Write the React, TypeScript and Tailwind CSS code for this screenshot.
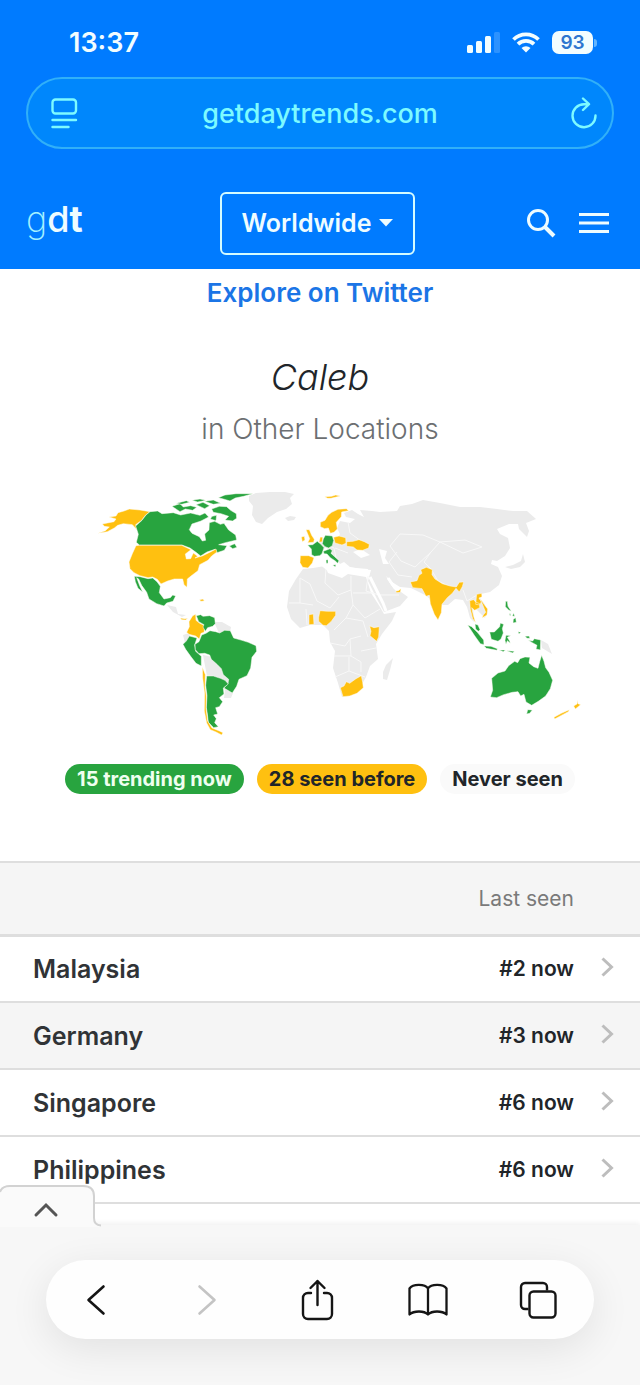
import React from "react";

type Tone = "now" | "before" | "never";
type Shape = { tone: Tone; d: string };
type Region = { transform: string; shapes: Shape[] };

const fills: Record<Tone, string> = {
  now: "#28a43f",
  before: "#ffc010",
  never: "#ebebeb",
};

const regions: Region[] = [
  {
    transform: "translate(0 0)",
    shapes: [
      // Greenland, Iceland, Svalbard
      { tone: "never", d: "M249 495 256 492 270 491 285 491 294 493 290 497 292 503 286 508 277 511 268 517 262 523 256 521 252 514 253 505 249 500Z" },
      { tone: "never", d: "M285 517 290 515 296 516 294 519 288 520Z" },
      // Europe and Asia
      { tone: "never", d: "M344 512 352 509 358 513 364 516 360 509 372 510 380 511 397 510 400 505 412 503 423 499 440 502 460 506 480 506 497 508 513 510 527 510 536 518 526 522 529 530 527 536 519 528 518 523 509 523 497 528 500 533 508 537 510 547 505 555 497 560 492 559 491 563 498 566 502 575 499 584 490 591 481 593 477 595 484 602 487 610 485 617 478 610 473 606 474 621 470 617 467 606 463 599 455 598 448 604 438 604 425 594 411 587 400 586 392 581 386 575 391 584 396 590 401 591 408 596 400 605 384 611 378 600 368 580 371 569 360 568 350 566 344 561 340 563 336 558 332 552 326 546 320 552 316 545 326 536 338 537 340 533 337 527 340 520 350 522 355 518 346 516Z" },
      // Africa
      { tone: "never", d: "M303 568 313 567 325 565 328 572 342 577 348 573 366 576 371 592 380 606 384 613 396 611 392 620 382 633 376 643 378 658 370 665 366 676 361 685 352 694 342 696 338 682 333 667 335 650 330 641 329 630 323 624 310 624 300 627 291 618 287 606 289 590 296 578Z" },
      { tone: "never", d: "M393 657 390 669 387 679 383 678 383 671 386 664Z" },
      // Central America, Ecuador, Guianas, Bolivia, Uruguay, Paraguay
      { tone: "never", d: "M167 604 176 606 178 613 186 614 182 616 173 611Z" },
      { tone: "never", d: "M214 621 222 621 231 626 230 631 219 632Z" },
      { tone: "never", d: "M183 634 189 632 191 637 185 642Z" },
      { tone: "never", d: "M203 654 213 656 221 664 229 680 226 686 216 677 207 675Z" },
      { tone: "never", d: "M225 688 233 692 231 697 224 697Z" },
      // Papua New Guinea, Japan
      { tone: "never", d: "M541 639 548 643 552 653 542 647Z" },
      { tone: "never", d: "M523 553 525 561 520 566 511 568 505 566 513 564 521 560Z" },
    ],
  },
  {
    // North America
    transform: "translate(90 480) scale(.3333)",
    shapes: [
      { tone: "before", d: "M180 92 150 87 118 84 102 90 84 95 78 105 57 108 78 114 72 122 37 129 43 136 58 138 46 149 24 157 52 152 73 141 83 133 100 128 127 131 141 146 137 131 155 118 167 102Z" },
      { tone: "now", d: "M180 92 203 90 216 98 250 95 272 102 302 96 330 103 345 96 356 108 333 120 306 129 298 146 306 157 328 167 337 180 347 178 344 159 357 147 358 125 374 121 391 130 402 127 416 147 437 162 440 177 406 185 386 191 411 194 403 208 381 215 375 205 351 213 332 225 318 214 300 201 276 192 148 192 139 184 145 160 137 135 156 118 168 102Z" },
      { tone: "now", d: "M246 76 270 68 280 78 302 74 320 79 308 88 286 84 270 92Z" },
      { tone: "now", d: "M259 67 289 59 299 64 275 70ZM306 58 330 54 348 58 323 63ZM318 71 339 64 359 74 344 83ZM344 61 370 57 392 67 370 70Z" },
      { tone: "now", d: "M365 84 388 76 410 77 422 88 439 98 440 112 428 120 405 117 416 106 393 98 370 94Z" },
      { tone: "now", d: "M366 106 380 103 378 119 361 114ZM385 50 405 42 438 38 489 38 461 46 436 51 420 60 400 54Z" },
      { tone: "now", d: "M418 195 434 188 441 199 428 203Z" },
      { tone: "before", d: "M148 193 275 193 303 206 286 219 289 234 302 233 310 216 323 226 315 231 337 225 363 212 378 204 381 213 365 225 354 238 329 251 324 269 302 286 292 294 291 319 282 311 278 294 253 294 233 300 213 309 202 295 188 288 174 290 150 284 132 275 120 263 117 243 127 218 138 194Z" },
      { tone: "now", d: "M133 286 150 287 174 293 188 291 201 302 211 316 208 335 222 354 241 350 248 342 257 345 249 361 230 366 222 375 200 368 177 354 170 334 155 313 146 294 140 290 149 314 158 333 144 322 136 302Z" },
      { tone: "before", d: "M329 356 339 354 343 360 332 361Z" },
    ],
  },
  {
    // South America
    transform: "translate(170 600) scale(.3333)",
    shapes: [
      { tone: "before", d: "M31 51 45 53 53 52 47 57 35 56Z" },
      { tone: "before", d: "M77 40 68 44 57 62 58 77 50 94 57 100 77 105 88 114 93 97 102 94 105 75 88 66 78 58Z" },
      { tone: "now", d: "M79 44 92 41 99 46 119 44 134 50 136 68 128 76 113 80 106 91 99 78 102 71 86 62Z" },
      { tone: "now", d: "M58 105 81 111 74 132 77 151 94 166 94 195 78 187 62 166 47 145 39 130 49 120Z" },
      { tone: "now", d: "M95 102 108 97 120 89 137 92 149 96 164 88 181 89 185 98 191 111 216 118 235 124 258 134 260 151 246 169 242 201 231 224 207 235 200 256 187 276 162 261 174 248 176 235 160 221 154 203 141 190 124 175 119 162 104 157 87 158 76 146 75 130 87 122Z" },
      { tone: "now", d: "M110 225 130 225 151 232 165 238 175 249 160 261 162 279 148 290 158 302 148 317 137 320 143 339 131 342 139 353 134 365 145 377 131 380 115 364 112 339 109 319 111 284 107 253Z" },
      { tone: "before", d: "M97 198 106 221 105 257 109 285 108 322 113 360 126 381 148 390 159 395 155 402 138 393 121 386 110 366 103 330 104 278 98 231Z" },
    ],
  },
  {
    // Europe
    transform: "translate(270 480) scale(.3333)",
    shapes: [
      { tone: "before", d: "M164 47 185 46 197 42 211 45 183 52 173 52Z" },
      { tone: "before", d: "M151 124 165 118 174 103 185 94 204 85 229 83 236 89 215 93 214 107 199 124 202 144 192 154 181 157 175 141 164 143 151 137Z" },
      { tone: "before", d: "M94 168 103 166 105 177 97 182ZM108 146 118 146 125 163 133 175 131 184 113 185 119 173Z" },
      { tone: "before", d: "M91 224 116 224 132 230 127 246 114 261 98 259 90 245Z" },
      { tone: "now", d: "M113 192 128 191 142 181 155 192 162 200 156 218 149 224 133 226 125 221 124 204Z" },
      { tone: "now", d: "M160 174 166 163 187 165 191 178 187 194 176 201 165 197 157 188Z" },
      { tone: "before", d: "M147 184 151 168 158 169 157 182Z" },
      { tone: "before", d: "M191 169 207 165 227 170 228 187 216 192 195 186Z" },
      { tone: "before", d: "M230 182 249 181 267 176 283 182 298 190 296 201 278 208 261 207 250 198 230 196Z" },
      { tone: "now", d: "M160 211 180 203 187 209 183 217 194 227 207 239 203 247 196 240 181 230 171 219 162 218Z" },
      { tone: "now", d: "M188 252 198 251 196 258ZM168 237 174 236 174 247 169 247Z" },
    ],
  },
  {
    // Africa
    transform: "translate(270 580) scale(.3333)",
    shapes: [
      { tone: "before", d: "M117 101 130 99 132 130 117 131Z" },
      { tone: "before", d: "M150 89 172 91 197 91 197 103 183 122 169 134 159 133 146 121 146 109Z" },
      { tone: "before", d: "M299 135 312 140 328 137 326 168 320 181 300 164 303 151Z" },
      { tone: "before", d: "M211 320 222 315 229 302 239 307 258 293 274 284 278 304 280 320 261 337 239 345 219 347Z" },
      { tone: "before", d: "M377 30 385 29 393 23 391 34 380 35Z" },
    ],
  },
  {
    // South Asia
    transform: "translate(380 480) scale(.3333)",
    shapes: [
      { tone: "before", d: "M91 303 111 299 117 283 126 277 122 266 139 259 157 266 156 281 165 294 187 308 210 315 229 318 238 304 251 303 247 317 238 333 228 322 217 337 202 350 186 370 184 395 174 417 163 400 151 368 148 343 138 346 126 323 98 320Z" },
      { tone: "before", d: "M290 340 305 337 306 347 297 352 304 362 300 372 287 370ZM269 359 281 356 287 363 299 368 299 380 284 388 275 380 280 403 287 425 278 413 271 385Z" },
      { tone: "before", d: "M299 350 310 367 323 384 321 402 306 411 310 402 317 394 309 374Z" },
    ],
  },
  {
    // Southeast Asia and Oceania
    transform: "translate(450 580) scale(.3333)",
    shapes: [
      { tone: "now", d: "M75 129 84 132 90 146 85 151 77 144ZM53 132 65 137 82 154 101 177 102 191 91 188 73 163ZM102 195 123 196 142 203 141 208 109 202Z" },
      { tone: "now", d: "M119 153 133 153 149 137 151 126 161 130 157 143 160 156 153 174 144 181 124 175Z" },
      { tone: "now", d: "M168 163 182 164 172 169 179 180 181 187 172 179 168 190 165 178ZM167 61 172 61 174 76 184 91 176 87 166 77ZM190 115 197 110 199 124 189 126ZM180 96 183 104 178 102ZM191 96 194 106 187 105Z" },
      { tone: "now", d: "M225 166 237 165 240 172 231 172ZM235 178 248 180 253 173 272 177 271 207 258 204 261 193 247 185ZM204 152 213 154 207 159ZM148 207 166 207 160 212ZM170 209 193 211 188 216Z" },
      { tone: "now", d: "M125 292 144 276 165 270 176 254 194 241 203 245 210 233 225 228 240 229 237 246 251 257 264 262 269 242 275 223 282 241 287 260 297 274 308 298 301 323 287 345 265 361 245 373 228 363 222 340 212 345 204 332 187 334 161 341 140 350 121 348 128 328Z" },
      { tone: "now", d: "M233 386 247 387 239 397 230 399Z" },
      { tone: "before", d: "M383 357 384 368 392 371 376 384 371 375 381 369ZM312 409 334 397 358 386 355 392 327 407 314 414Z" },
    ],
  },
];

const borders =
  "M300 577 310 583 317 600 M326 567 325 582 338 594 351 589 351 575 M317 600 330 607 339 596 M351 589 353 604 346 617 M353 592 371 592 M353 604 365 617 380 608 M300 602 313 604 M289 602 300 602 300 577 M306 608 307 624 M334 629 346 617 363 620 368 636 M330 642 345 645 350 638 361 635 M350 638 351 655 334 655 M351 655 361 661 361 671 M361 650 376 647 M335 676 349 670 365 676 M349 656 349 670 M368 575 366 590 379 594 399 594 M400 533 390 545 401 560 415 566 431 551 440 541 423 534 400 533 M440 541 463 552 482 546 465 539 440 541 M397 551 389 561 398 574 412 576 M431 551 424 561 431 568 438 580 454 588 M463 589 467 600 477 594 M348 521 350 532 361 540 M324 543 334 547 336 557 M335 547 348 552";

function WorldMap() {
  return (
    <svg
      viewBox="0 480 640 262"
      className="block w-full"
      role="img"
      aria-label="World map of trending locations"
    >
      {regions.map((region) => (
        <g key={region.transform} transform={region.transform}>
          {region.shapes.map((shape) => (
            <path
              key={shape.d}
              d={shape.d}
              fill={fills[shape.tone]}
              stroke={shape.tone === "never" ? "none" : "#fffdf6"}
              strokeWidth="0.5"
              strokeLinejoin="round"
              vectorEffect="non-scaling-stroke"
            />
          ))}
          {region.transform === "translate(0 0)" && (
            <g>
              <path d={borders} fill="none" stroke="#f8f8f8" strokeWidth="1" />
              <path d="M353 551 361 548 370 554 361 557ZM379 548 387 550 385 557 389 563 383 563ZM318 562 330 562 340 565 356 567 368 568 367 574 349 573 329 571ZM329 538 342 536 341 540Z" fill="#fff" />
              <path d="M370 576 383 602 386 610 M388 577 395 587 406 590" fill="none" stroke="#fff" strokeWidth="3" />
            </g>
          )}
        </g>
      ))}
    </svg>
  );
}

const rows = [
  { place: "Malaysia", seen: "#2 now", shaded: false },
  { place: "Germany", seen: "#3 now", shaded: true },
  { place: "Singapore", seen: "#6 now", shaded: false },
  { place: "Philippines", seen: "#6 now", shaded: false },
];

function StatusBar() {
  return (
    <div className="flex h-[77px] items-center justify-between pt-2 pr-[43px] pl-[69px] text-[#f2fdff]">
      <span className="text-[27px] leading-8 font-semibold">13:37</span>
      <div className="flex items-center gap-3">
        <svg width="33" height="22" viewBox="0 0 33 22" aria-hidden="true">
          <g fill="currentColor">
            <rect x="0" y="13" width="6" height="8" rx="1.5" />
            <rect x="9" y="9" width="6" height="12" rx="1.5" />
            <rect x="18" y="4" width="6" height="17" rx="1.5" />
            <rect x="27" y="0" width="6" height="21" rx="1.5" opacity=".18" />
          </g>
        </svg>
        <svg width="28" height="21" viewBox="0 0 28 21" aria-hidden="true">
          <g fill="none" stroke="currentColor" strokeWidth="3.8">
            <path d="M1.5 7.5a18 18 0 0 1 25 0" />
            <path d="M6 12.2a11.5 11.5 0 0 1 16 0" />
          </g>
          <path d="M9.5 16a6.5 6.5 0 0 1 9 0L14 20.5Z" fill="currentColor" />
        </svg>
        <div className="flex items-center gap-px">
          <span className="flex h-[23px] w-[41px] items-center justify-center rounded-[7px] bg-[#f2fdff] text-[19px] leading-none font-semibold text-[#2d76cf]">
            93
          </span>
          <span className="h-2 w-[3px] rounded-r bg-[#62b5ff]" />
        </div>
      </div>
    </div>
  );
}

function AddressBar() {
  return (
    <div className="mx-[26px] grid h-[72px] grid-cols-[1fr_auto_1fr] items-center rounded-full border-2 border-[#31b0f8] bg-[#0087fc] text-[#7dfaff]">
      <button type="button" aria-label="Page menu" className="ml-[23px] justify-self-start">
        <svg width="27" height="31" viewBox="0 0 27 31" fill="none" stroke="currentColor" strokeWidth="2.4" strokeLinecap="round">
          <rect x="1.500" y="1.500" width="23.500" height="14" rx="3" />
          <path d="M1.500 22h23.500M1.500 29h16" />
        </svg>
      </button>
      <button type="button" className="pt-px text-[27px] leading-8 font-medium">
        getdaytrends.com
      </button>
      <button type="button" aria-label="Reload" className="mr-[15px] justify-self-end">
        <svg width="26" height="32" viewBox="0 0 26 32" fill="none" stroke="currentColor" strokeWidth="2.4" strokeLinecap="round" strokeLinejoin="round">
          <path d="M17 7.200H13A11.500 11.500 0 1 0 24.500 18.500M12 1.500 18 7.200 12 13" />
        </svg>
      </button>
    </div>
  );
}

function SiteHeader() {
  return (
    <header className="grid h-[120px] grid-cols-[1fr_auto_1fr] items-center pt-7 pr-[31px] pl-[26px] text-[#eefcff]">
      <a href="#home" className="justify-self-start pb-2 text-[36px] leading-10" aria-label="gdt">
        <span className="font-extralight text-[#a4f0ff]">g</span>
        <span className="font-medium">d</span>
        <span className="font-bold">t</span>
      </a>
      <button
        type="button"
        aria-haspopup="menu"
        className="flex h-[63px] w-[195px] items-center justify-center gap-2 rounded-md border-2 border-[#d4fbff] text-[25px] leading-8 font-semibold"
      >
        Worldwide
        <svg width="14" height="8" viewBox="0 0 14 8" aria-hidden="true">
          <path d="M0 0h14L7 7.5Z" fill="currentColor" />
        </svg>
      </button>
      <div className="flex items-center gap-[23px] justify-self-end">
        <button type="button" aria-label="Search">
          <svg width="29" height="29" viewBox="0 0 29 29" fill="none" stroke="currentColor">
            <circle cx="11" cy="11" r="9.500" strokeWidth="3" />
            <path d="M17.500 17.500 27 27" strokeWidth="4" />
          </svg>
        </button>
        <button type="button" aria-label="Menu">
          <svg width="30" height="22" viewBox="0 0 30 22" stroke="currentColor" strokeWidth="3">
            <path d="M0 2.500h30M0 11h30M0 19.500h30" />
          </svg>
        </button>
      </div>
    </header>
  );
}

const toolButton = "flex w-10 items-center justify-center";

function BottomBar() {
  return (
    <div className="relative bg-[#f7f7f7] px-[46px] pt-[35px] pb-[46px] shadow-[0_-2px_5px_rgba(0,0,0,0.06)]">
      <button
        type="button"
        aria-label="Expand"
        className="absolute -top-[40px] left-0"
      >
        <svg width="102" height="42" viewBox="0 0 102 42" fill="none">
          <path d="M0 7Q2 1 10 1H83Q94 1 94 11V33Q94 40 101 40.500V42H0Z" fill="#fafafa" />
          <path d="M0 7Q2 1 10 1H83Q94 1 94 11V33Q94 40 101 40.500" stroke="#d2d2d2" strokeWidth="2" />
          <path d="M36 30 46 20 56 30" stroke="#555" strokeWidth="3" strokeLinecap="round" />
        </svg>
      </button>
      <nav className="flex h-[79px] items-center justify-between rounded-full bg-[#fefefe] pr-[36px] pl-[30px] text-[#151515] shadow-[0_10px_40px_rgba(0,0,0,0.09)]">
        <button type="button" aria-label="Back" className={toolButton}>
          <svg width="20" height="32" viewBox="0 0 20 32" fill="none" stroke="currentColor" strokeWidth="2.6" strokeLinecap="round" strokeLinejoin="round">
            <path d="M17.500 2.500 2.500 16l15 13.500" />
          </svg>
        </button>
        <button type="button" aria-label="Forward" disabled className={toolButton}>
          <svg width="20" height="32" viewBox="0 0 20 32" fill="none" stroke="#c4c4c4" strokeWidth="2.6" strokeLinecap="round" strokeLinejoin="round">
            <path d="M2.500 2.500 17.500 16l-15 13.500" />
          </svg>
        </button>
        <button type="button" aria-label="Share" className={toolButton}>
          <svg width="34" height="42" viewBox="0 0 34 42" fill="none" stroke="currentColor" strokeWidth="2.4" strokeLinecap="round" strokeLinejoin="round">
            <path d="M11 14H8a5 5 0 0 0-5 5v16a5 5 0 0 0 5 5h19a5 5 0 0 0 5-5V19a5 5 0 0 0-5-5h-3M17.500 26V2M10.500 9l7-7 7 7" />
          </svg>
        </button>
        <button type="button" aria-label="Bookmarks" className={toolButton}>
          <svg width="40" height="34" viewBox="0 0 40 34" fill="none" stroke="currentColor" strokeWidth="2.3" strokeLinecap="round" strokeLinejoin="round">
            <path d="M20 5.500C17 .8 5 .5 1.500 5.500V31.500C6 27.500 16 27.500 20 31.500C24 27.500 34 27.500 38.500 31.500V5.500C35 .5 23 .8 20 5.500V31.500" />
          </svg>
        </button>
        <button type="button" aria-label="Tabs" className={toolButton}>
          <svg width="38" height="38" viewBox="0 0 38 38" fill="none" stroke="currentColor" strokeWidth="2.4" strokeLinejoin="round">
            <rect x="10.500" y="10.500" width="26" height="26" rx="4" />
            <path d="M9.500 28H6a4 4 0 0 1-4-4V6a4 4 0 0 1 4-4h18a4 4 0 0 1 4 4v3.500" />
          </svg>
        </button>
      </nav>
    </div>
  );
}

export default function App() {
  return (
    <div className="overflow-hidden bg-white font-['Inter','Liberation_Sans',sans-serif] text-[#212529]">
      <div className="bg-[#007bff]">
        <StatusBar />
        <AddressBar />
        <SiteHeader />
      </div>

      <main>
        <section className="text-center">
          <a href="#explore" className="block pt-2 text-[26px] leading-8 font-semibold text-[#1b75e6]">
            Explore on Twitter
          </a>
          <h1 className="pt-[44px] text-[36px] leading-12 font-light italic">Caleb</h1>
          <h2 className="pt-2 text-[28px] leading-10 font-light text-[#6c6f72]">in Other Locations</h2>
          <div className="pt-8">
            <WorldMap />
          </div>
          <ul className="flex justify-center gap-[13px] pt-[21px] pb-[67px] text-[20px] leading-[30px] font-bold">
            <li className="rounded-full bg-[#28a43f] px-3 text-[#effff0]">15 trending now</li>
            <li className="rounded-full bg-[#ffc010] px-3">28 seen before</li>
            <li className="rounded-full bg-[#fafafa] px-3">Never seen</li>
          </ul>
        </section>

        <table className="w-full border-collapse">
          <thead>
            <tr className="h-[73px] border-t-2 border-b-3 border-[#dedede] bg-[#f5f5f5]">
              <th scope="col" aria-label="Location" />
              <th scope="col" className="text-right text-[21px] font-normal text-[#7a7a7a]">Last seen</th>
              <th scope="col" aria-label="Open" className="w-[66px]" />
            </tr>
          </thead>
          <tbody>
            {rows.map((row) => (
              <tr
                key={row.place}
                className={
                  row.shaded
                    ? "h-[67px] border-b-2 border-[#dedede] bg-[#f5f5f5]"
                    : "h-[67px] border-b-2 border-[#dedede]"
                }
              >
                <td className="pl-[33px] text-[25px] leading-8 font-semibold text-[#303336]">{row.place}</td>
                <td className="text-right text-[21px] leading-8 font-semibold">{row.seen}</td>
                <td className="pb-1 pl-[27px]">
                  <svg width="13" height="20" viewBox="0 0 13 20" fill="none" stroke="#bdbdbd" strokeWidth="3" aria-hidden="true">
                    <path d="M1.500 1.500 10.500 10l-9 8.500" />
                  </svg>
                </td>
              </tr>
            ))}
          </tbody>
        </table>
        <div className="h-[21px]" />
      </main>

      <BottomBar />
    </div>
  );
}
